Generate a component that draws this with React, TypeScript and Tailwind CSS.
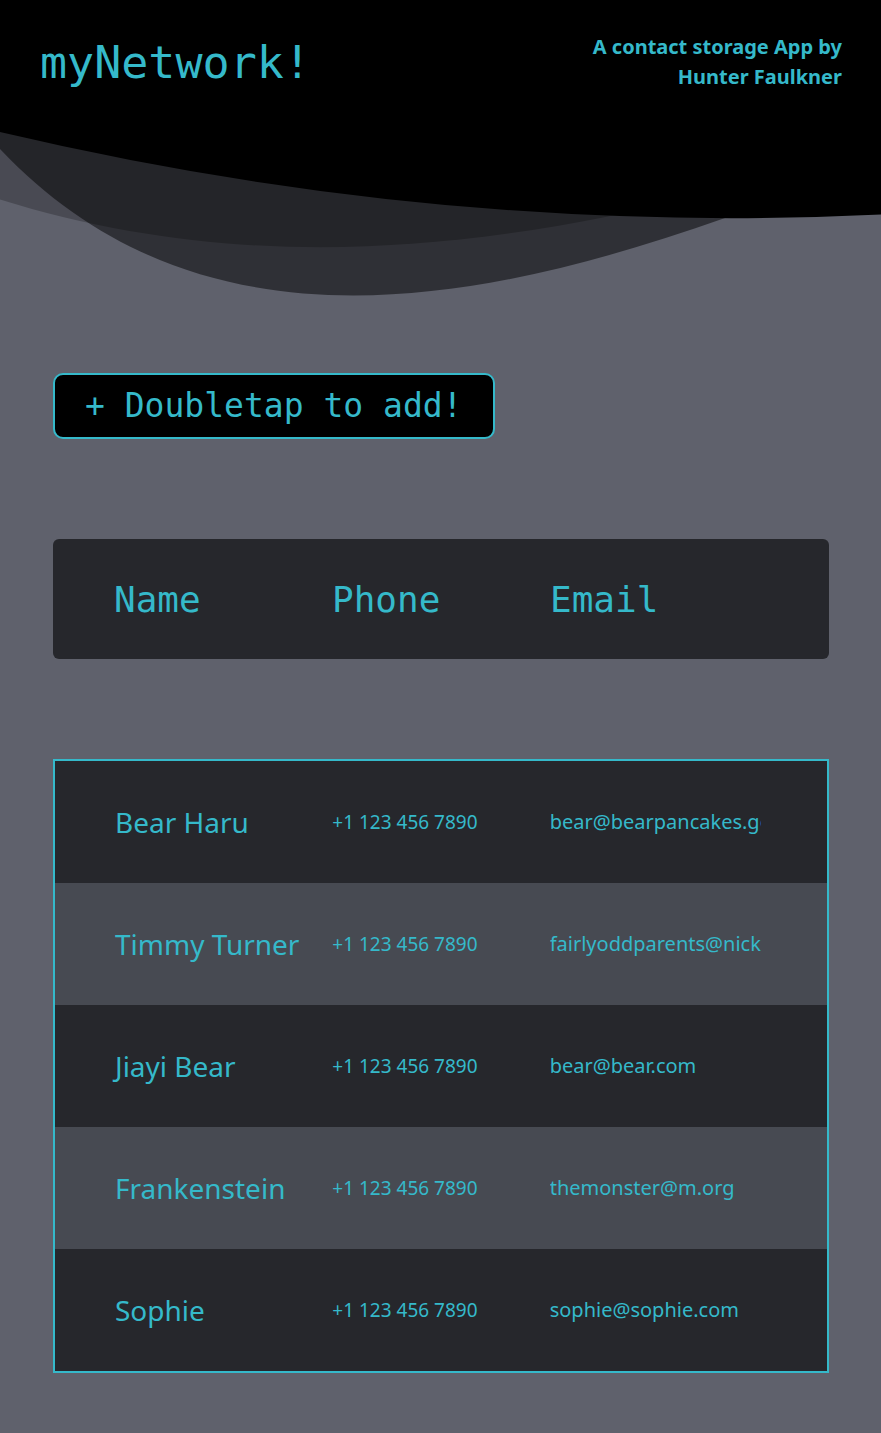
type Contact = { name: string; phone: string; email: string };

const contacts: Contact[] = [
  { name: "Bear Haru", phone: "+1 123 456 7890", email: "bear@bearpancakes.gov" },
  { name: "Timmy Turner", phone: "+1 123 456 7890", email: "fairlyoddparents@nick.com" },
  { name: "Jiayi Bear", phone: "+1 123 456 7890", email: "bear@bear.com" },
  { name: "Frankenstein", phone: "+1 123 456 7890", email: "themonster@m.org" },
  { name: "Sophie", phone: "+1 123 456 7890", email: "sophie@sophie.com" },
];

const columns = ["Name", "Phone", "Email"];

function Waves() {
  return (
    <svg
      className="absolute inset-x-0 top-0 h-[300px] w-full"
      viewBox="0 0 881 300"
      preserveAspectRatio="none"
      aria-hidden="true"
    >
      <path d="M0 0V199.5C200 262 400 258 607 216.7L881 150V0Z" fill="#000" fillOpacity="0.23" />
      <path d="M0 0V149C195 355 465 310 725 218L881 165V0Z" fill="#000" fillOpacity="0.5" />
      <path d="M0 0V132Q440.5 235.8 881 214.5V0Z" fill="#000" />
    </svg>
  );
}

function Header() {
  return (
    <header className="relative h-[300px]">
      <Waves />
      <div className="relative flex items-center justify-between pt-8 pr-[39px] pl-10">
        <h1 className="pt-0.5 font-['DejaVu_Sans_Mono',monospace] text-[45px] leading-[58px]">myNetwork!</h1>
        <p className="w-[260px] text-right text-[20px] leading-[30px] font-bold">
          A contact storage App by Hunter Faulkner
        </p>
      </div>
    </header>
  );
}

function ContactTable() {
  return (
    <table className="mt-[100px] block text-left">
      <thead className="block rounded-md bg-[#26272c] px-[61px]">
        <tr className="grid h-[120px] grid-cols-3 items-center">
          {columns.map((label) => (
            <th
              key={label}
              scope="col"
              className="pt-0.5 font-['DejaVu_Sans_Mono',monospace] text-[36px] leading-10 font-normal"
            >
              {label}
            </th>
          ))}
        </tr>
      </thead>
      <tbody className="mt-[100px] block border-2 border-[#35b9ca]">
        {contacts.map((contact) => (
          <tr
            key={contact.name}
            className="grid h-[122px] grid-cols-3 items-center bg-[#26272c] px-[60px] even:bg-[#474a52]"
          >
            <td className="text-[28px] leading-10 whitespace-nowrap">{contact.name}</td>
            <td className="text-[19px] leading-8 whitespace-nowrap">{contact.phone}</td>
            <td className="mr-1.5 overflow-hidden text-[20px] leading-8 whitespace-nowrap">{contact.email}</td>
          </tr>
        ))}
      </tbody>
    </table>
  );
}

export default function App() {
  return (
    <div className="min-h-screen bg-[#5f616c] font-['Noto_Sans',sans-serif] text-[#35b9ca]">
      <Header />
      <main className="pt-[73px] pr-[52px] pb-[60px] pl-[53px]">
        <button
          type="button"
          className="block h-[66px] rounded-[10px] border-2 border-[#35b9ca] bg-black px-[30px] font-['DejaVu_Sans_Mono',monospace] text-[33px] leading-10"
        >
          + Doubletap to add!
        </button>
        <ContactTable />
      </main>
    </div>
  );
}
